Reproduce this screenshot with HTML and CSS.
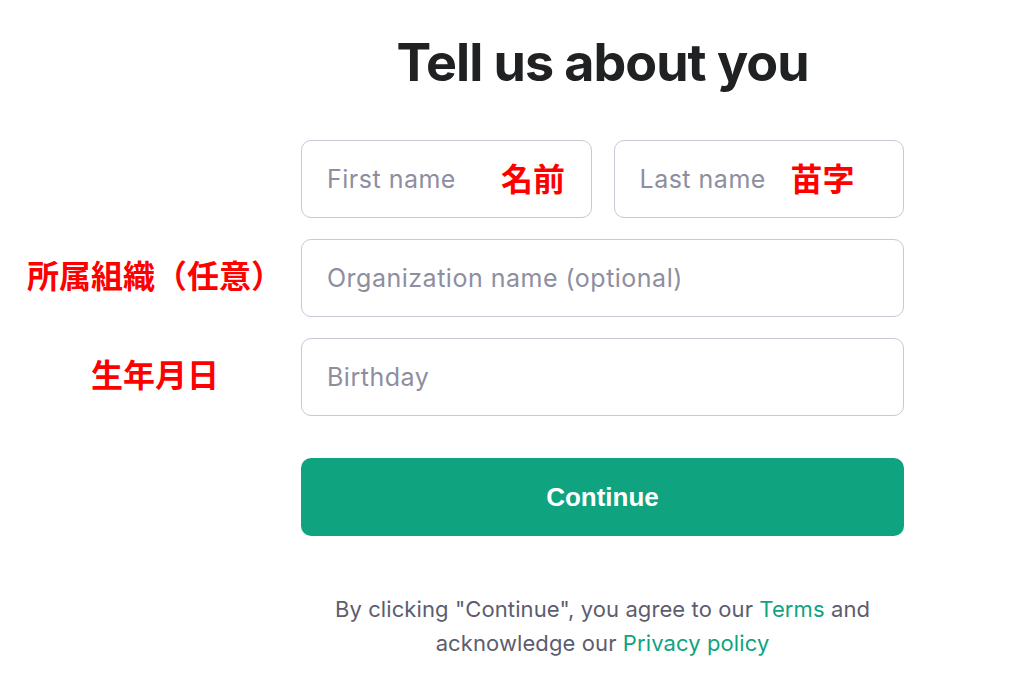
FILE: index.html
```html
<!DOCTYPE html>
<html lang="en">
<head>
<meta charset="utf-8">
<title>Tell us about you</title>
<link rel="stylesheet" href="styles.css">
</head>
<body>
<main class="page">
  <h1 class="title">Tell us about you</h1>

  <div class="row row-names">
    <div class="field">
      <span class="placeholder">First name</span>
      <span class="note note-first">名前</span>
    </div>
    <div class="field">
      <span class="placeholder">Last name</span>
      <span class="note note-last">苗字</span>
    </div>
  </div>

  <div class="label">所属組織（任意）</div>
  <div class="row">
    <div class="field"><span class="placeholder">Organization name (optional)</span></div>
  </div>

  <div class="label">生年月日</div>
  <div class="row">
    <div class="field"><span class="placeholder">Birthday</span></div>
  </div>

  <div class="row row-button">
    <button class="continue" type="button">Continue</button>
  </div>

  <p class="legal">By clicking "Continue", you agree to our <a class="link" href="#">Terms</a> and<br>acknowledge our <a class="link" href="#">Privacy policy</a></p>
</main>
</body>
</html>
```

FILE: styles.css
```css
html, body {
  margin: 0;
  padding: 0;
  background: #ffffff;
}

body {
  font-family: Inter, "Noto Sans", "Liberation Sans", sans-serif;
  width: 1024px;
  height: 685px;
  overflow: hidden;
}

.page {
  display: grid;
  grid-template-columns: 301px 603px;
  align-items: center;
}

.title {
  grid-column: 2;
  margin: 37px 0 51px;
  height: 52px;
  font-size: 52px;
  line-height: 52px;
  font-weight: 700;
  letter-spacing: -1px;
  color: #202123;
  text-align: center;
}

.row {
  grid-column: 2;
  margin-bottom: 21px;
}

.row-names {
  display: grid;
  grid-template-columns: 1fr 1fr;
  column-gap: 22px;
}

.field {
  position: relative;
  box-sizing: border-box;
  height: 78px;
  border: 1.5px solid #c9c9d6;
  border-radius: 10px;
  display: flex;
  align-items: center;
  padding: 0 25px;
}

.placeholder {
  font-size: 25px;
  color: #8e8ea0;
  letter-spacing: 0.5px;
}

.note {
  position: absolute;
  top: 50%;
  transform: translateY(calc(-50% - 2px));
  font-family: "Noto Sans CJK JP", sans-serif;
  font-weight: 700;
  font-size: 32px;
  color: #ff0000;
  line-height: 1;
}

.note-first { left: 199px; }
.note-last { left: 176px; }

.label {
  grid-column: 1;
  margin-bottom: 29px;
  padding-left: 9px;
  text-align: center;
  font-family: "Noto Sans CJK JP", sans-serif;
  font-weight: 700;
  font-size: 32px;
  color: #ff0000;
  line-height: 1;
}

.row-button {
  margin-top: 21px;
  margin-bottom: 56px;
}

.continue {
  display: block;
  width: 100%;
  height: 78px;
  border: none;
  border-radius: 10px;
  background: #10a37f;
  color: #ffffff;
  font-family: "Liberation Sans", Arial, sans-serif;
  font-weight: 700;
  font-size: 26px;
}

.legal {
  grid-column: 2;
  margin: 0;
  text-align: center;
  font-size: 22px;
  line-height: 34px;
  color: #5d5d6e;
  letter-spacing: 0.1px;
}

.link {
  color: #10a37f;
  text-decoration: none;
}
```
